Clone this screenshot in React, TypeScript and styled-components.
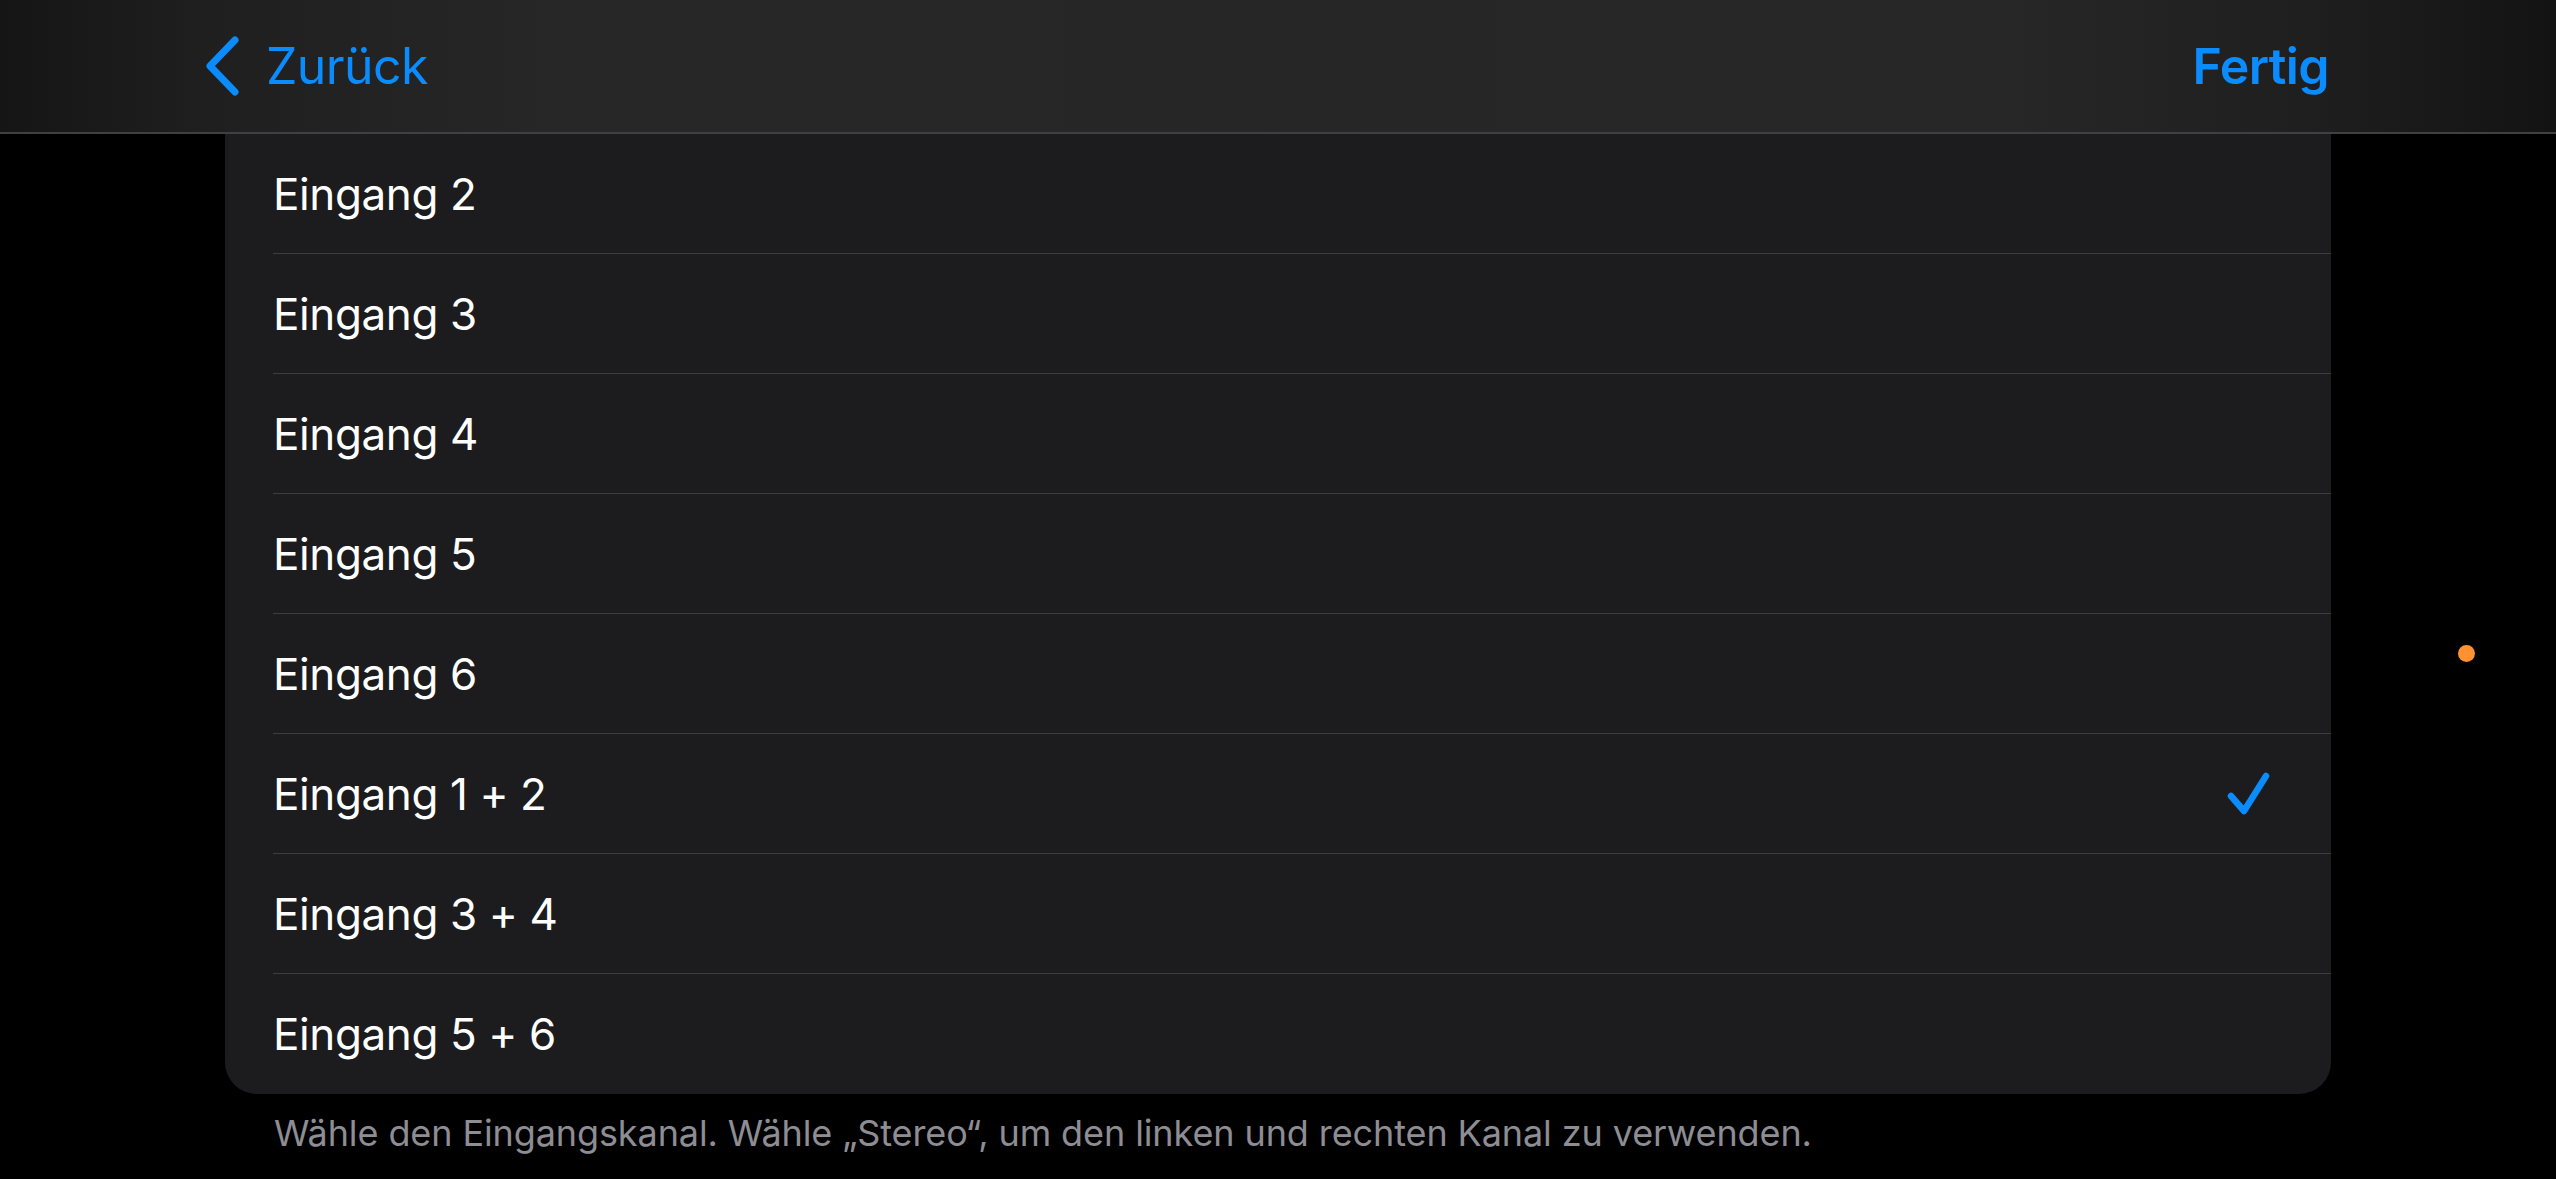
import React from "react";
import styled, { createGlobalStyle } from "styled-components";

const Global = createGlobalStyle`
  html, body {
    margin: 0;
    padding: 0;
    background: #000;
    overflow: hidden;
  }
  body {
    font-family: Inter, "Noto Sans", "Liberation Sans", sans-serif;
    -webkit-font-smoothing: antialiased;
  }
`;

const Page = styled.div`
  position: relative;
  width: 2556px;
  height: 1179px;
  background: #000;
  display: flex;
  flex-direction: column;
  overflow: hidden;
`;

const NavBar = styled.header`
  height: 132px;
  flex: 0 0 auto;
  display: flex;
  align-items: center;
  justify-content: space-between;
  padding: 0 227px 0 204px;
  background: linear-gradient(
    90deg,
    #151515 0%,
    #1f1f1f 8%,
    #272727 22%,
    #262626 50%,
    #272727 78%,
    #1f1f1f 90%,
    #131313 100%
  );
  border-bottom: 2px solid #404042;
  box-sizing: content-box;
`;

const BackButton = styled.button`
  display: flex;
  align-items: center;
  gap: 26px;
  background: none;
  border: none;
  padding: 0;
  color: #0a8cff;
  font-family: Inter, "Noto Sans", sans-serif;
  font-size: 50px;
  font-weight: 400;
  letter-spacing: -0.6px;
  cursor: pointer;
`;

const DoneButton = styled.button`
  background: none;
  border: none;
  padding: 0;
  color: #0a8cff;
  font-family: Inter, "Noto Sans", sans-serif;
  font-size: 50px;
  font-weight: 600;
  letter-spacing: -0.6px;
  cursor: pointer;
`;

const Content = styled.main`
  display: flex;
  flex-direction: column;
  padding: 0 225px;
`;

const Card = styled.div`
  background: #1c1c1e;
  border-radius: 0 0 32px 32px;
  display: flex;
  flex-direction: column;
`;

const Row = styled.div<{ $last?: boolean }>`
  height: 120px;
  margin-left: 48px;
  display: flex;
  align-items: center;
  justify-content: space-between;
  padding-right: 58px;
  box-sizing: border-box;
  border-bottom: ${(p) => (p.$last ? "none" : "1.5px solid #3d3d41")};
`;

const Label = styled.span`
  color: #ffffff;
  font-size: 44px;
  font-weight: 400;
  letter-spacing: -0.4px;
`;

const Footer = styled.p`
  margin: 17px 0 0 49px;
  color: #8d8d93;
  font-size: 36px;
  font-weight: 400;
  letter-spacing: -0.1px;
  line-height: 44px;
`;

const RecordingDot = styled.span`
  position: absolute;
  left: 2458px;
  top: 645px;
  width: 17px;
  height: 17px;
  border-radius: 50%;
  background: #ff9230;
`;

const Chevron = () => (
  <svg width="36" height="60" viewBox="0 0 36 60" aria-hidden>
    <path
      d="M31 4 L6 30 L31 56"
      fill="none"
      stroke="#0a8cff"
      strokeWidth="7"
      strokeLinecap="round"
      strokeLinejoin="round"
    />
  </svg>
);

const Check = () => (
  <svg width="48" height="48" viewBox="0 0 48 48" aria-hidden>
    <path
      d="M6 26 L19 41 L41 6"
      fill="none"
      stroke="#0a8cff"
      strokeWidth="6.5"
      strokeLinecap="round"
      strokeLinejoin="round"
    />
  </svg>
);

const items = [
  "Eingang 2",
  "Eingang 3",
  "Eingang 4",
  "Eingang 5",
  "Eingang 6",
  "Eingang 1 + 2",
  "Eingang 3 + 4",
  "Eingang 5 + 6",
];
const selected = "Eingang 1 + 2";

export default function App() {
  return (
    <>
      <Global />
      <Page>
        <NavBar>
          <BackButton>
            <Chevron />
            Zurück
          </BackButton>
          <DoneButton>Fertig</DoneButton>
        </NavBar>
        <Content>
          <Card>
            {items.map((it, i) => (
              <Row key={it} $last={i === items.length - 1}>
                <Label>{it}</Label>
                {it === selected && <Check />}
              </Row>
            ))}
          </Card>
          <Footer>
            Wähle den Eingangskanal. Wähle „Stereo“, um den linken und rechten Kanal zu verwenden.
          </Footer>
        </Content>
        <RecordingDot />
      </Page>
    </>
  );
}
